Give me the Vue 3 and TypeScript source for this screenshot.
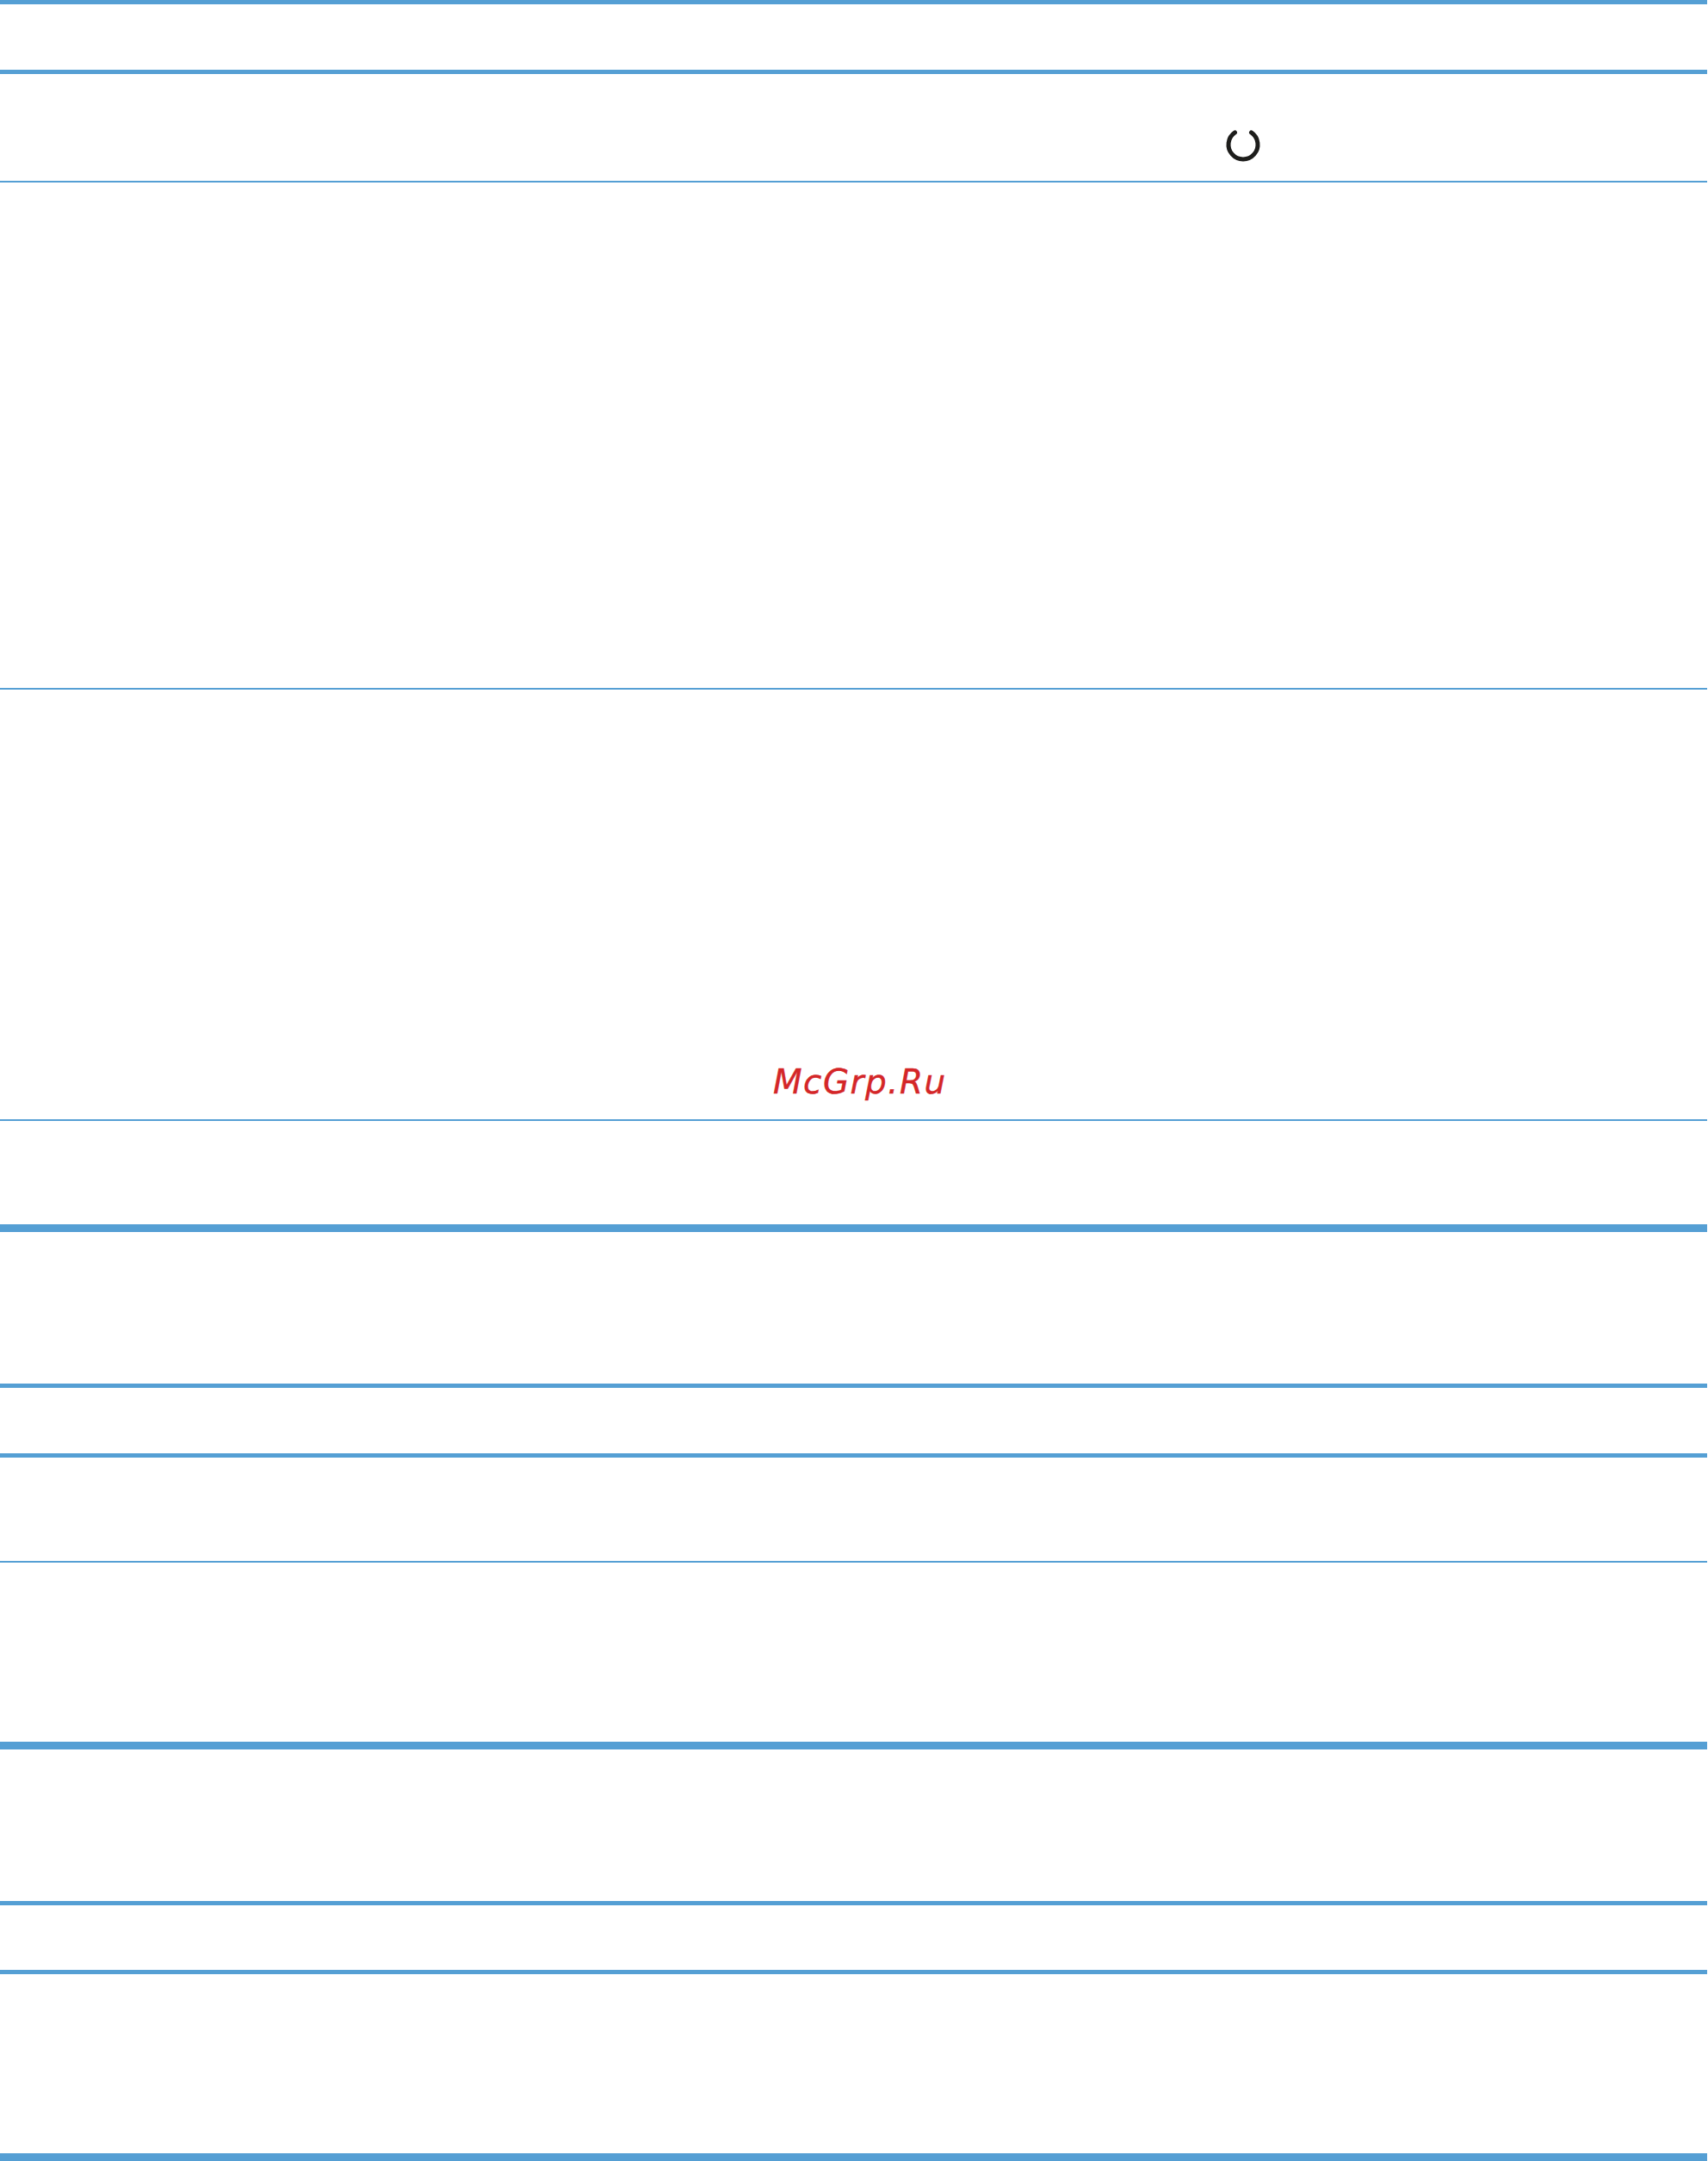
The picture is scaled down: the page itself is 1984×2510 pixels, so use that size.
<script setup lang="ts">
interface Band {
  weight: 'thin' | 'medium' | 'thick'
  height: number
  kind?: 'with-icon' | 'with-mark'
}

const bands: Band[] = [
  { weight: 'medium', height: 81 },
  { weight: 'medium', height: 129, kind: 'with-icon' },
  { weight: 'thin', height: 589 },
  { weight: 'thin', height: 501, kind: 'with-mark' },
  { weight: 'thin', height: 122 },
  { weight: 'thick', height: 185 },
  { weight: 'medium', height: 81 },
  { weight: 'medium', height: 125 },
  { weight: 'thin', height: 210 },
  { weight: 'thick', height: 185 },
  { weight: 'medium', height: 80 },
  { weight: 'medium', height: 213 },
  { weight: 'thick', height: 9 },
]
</script>

<template>
  <main class="page">
    <section
      v-for="(band, i) in bands"
      :key="i"
      class="band"
      :class="[band.weight, band.kind]"
      :style="{ height: band.height + 'px' }"
    >
      <svg v-if="band.kind === 'with-icon'" class="power" viewBox="0 0 44 44" width="44" height="44" aria-hidden="true">
        <path d="M12.5 7.9 A17 17 0 1 0 31.5 7.9" />
      </svg>
      <span v-if="band.kind === 'with-mark'" class="mark">McGrp.Ru</span>
    </section>
  </main>
</template>

<style scoped>
.page {
  width: 1984px;
  height: 2510px;
  background: #ffffff;
  overflow: hidden;
}
.band {
  box-sizing: border-box;
  width: 1983px;
  border-top: 0 solid #559fd4;
}
.thin { border-top-width: 2px; }
.medium { border-top-width: 5px; }
.thick { border-top-width: 9px; }
.with-icon {
  display: flex;
  align-items: flex-start;
  padding: 60px 0 0 1422px;
}
.power {
  display: block;
  fill: none;
  stroke: #1d1d1b;
  stroke-width: 5;
  stroke-linecap: round;
}
.with-mark {
  padding: 434px 0 0 898px;
}
.mark {
  display: block;
  font-family: "DejaVu Sans", sans-serif;
  font-style: oblique;
  font-size: 39px;
  line-height: 44px;
  letter-spacing: 1.4px;
  color: #d42628;
  -webkit-text-stroke: 0.4px #d42628;
}
</style>
